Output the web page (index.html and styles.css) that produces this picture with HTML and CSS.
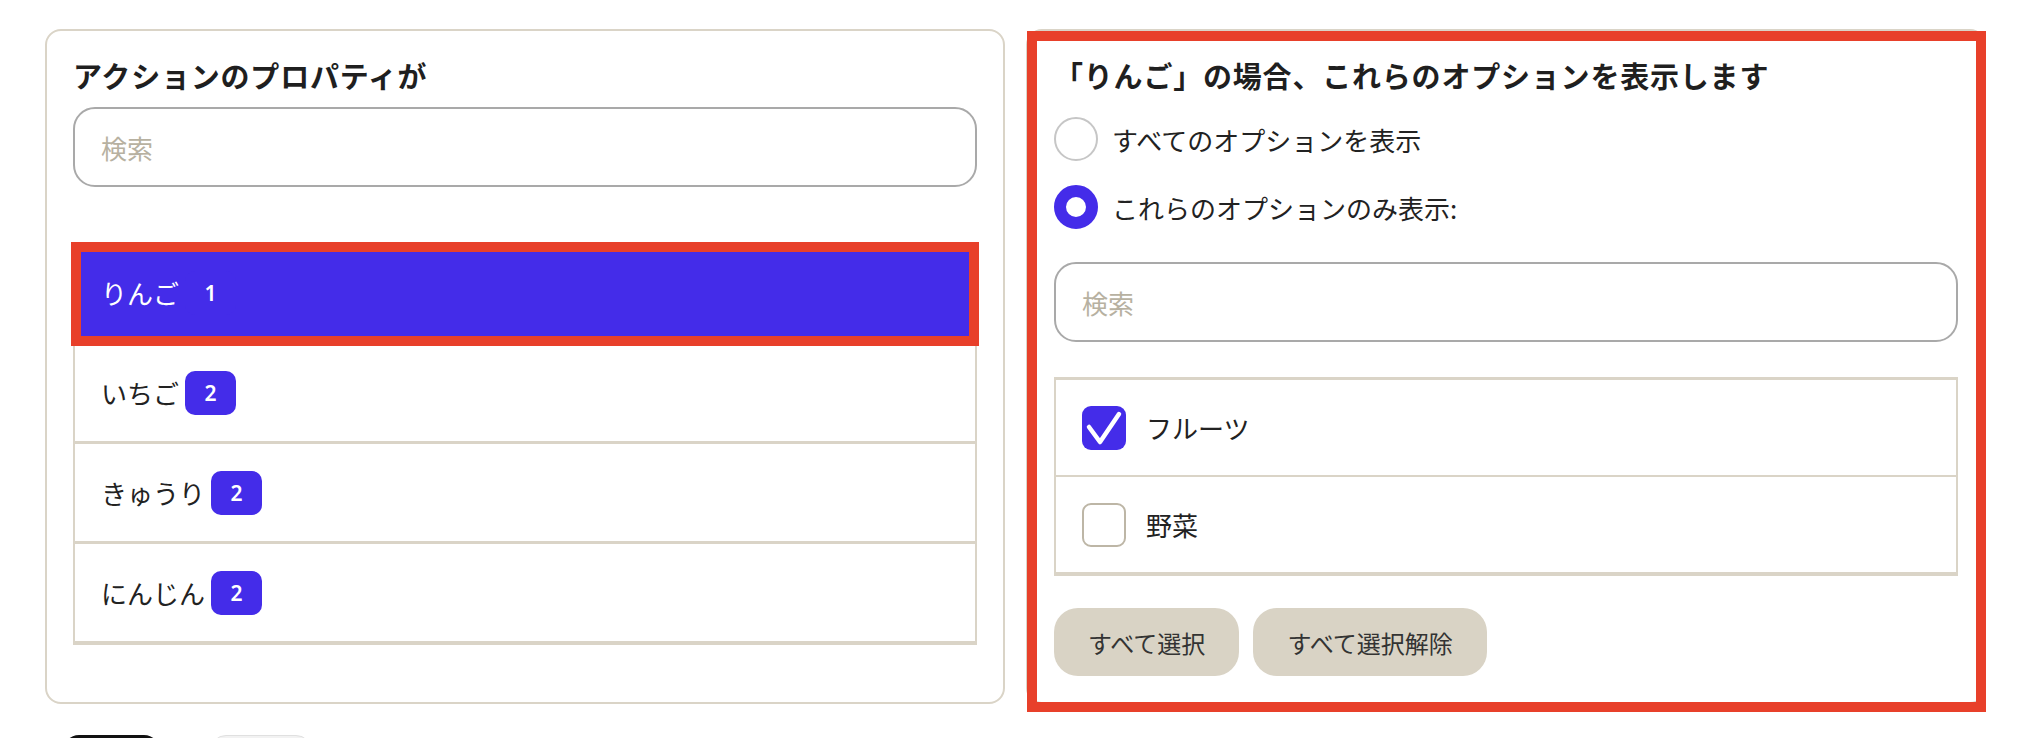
FILE: index.html
```html
<!DOCTYPE html>
<html lang="ja">
<head>
<meta charset="utf-8">
<title>オプション設定</title>
<link rel="stylesheet" href="styles.css">
</head>
<body>
<div class="page">
  <div class="panels">
    <section class="card">
      <h2 class="card-title">アクションのプロパティが</h2>
      <input class="search" type="text" placeholder="検索">
      <ul class="value-list">
        <li class="value-item is-selected"><span class="value-label">りんご</span><span class="badge">1</span></li>
        <li class="value-item"><span class="value-label">いちご</span><span class="badge">2</span></li>
        <li class="value-item"><span class="value-label">きゅうり</span><span class="badge">2</span></li>
        <li class="value-item"><span class="value-label">にんじん</span><span class="badge">2</span></li>
      </ul>
    </section>
    <section class="card card--annotated">
      <h2 class="card-title">「りんご」の場合、これらのオプションを表示します</h2>
      <div class="radio-group">
        <div class="radio-row"><span class="radio"></span><span>すべてのオプションを表示</span></div>
        <div class="radio-row"><span class="radio is-checked"></span><span>これらのオプションのみ表示:</span></div>
      </div>
      <input class="search search--options" type="text" placeholder="検索">
      <ul class="option-list">
        <li class="option-row">
          <span class="checkbox is-checked"><svg viewBox="0 0 44 44" width="44" height="44"><path d="M7 21 L18 36 L37 8" fill="none" stroke="#fff" stroke-width="4.5" stroke-linecap="round" stroke-linejoin="round"/></svg></span>
          <span>フルーツ</span>
        </li>
        <li class="option-row">
          <span class="checkbox"></span>
          <span>野菜</span>
        </li>
      </ul>
      <div class="actions">
        <button class="pill-btn" type="button">すべて選択</button>
        <button class="pill-btn" type="button">すべて選択解除</button>
      </div>
    </section>
  </div>
  <div class="footer-actions">
    <button class="btn btn--dark" type="button" aria-label="primary"></button>
    <button class="btn btn--light" type="button" aria-label="secondary"></button>
  </div>
</div>
</body>
</html>
```

FILE: styles.css
```css
body {
  margin: 0;
  background: #fff;
  color: #222;
  font-family: "Noto Sans CJK JP", "Noto Sans", sans-serif;
}

.page {
  padding: 29px 0 0 45px;
}

.panels {
  display: flex;
  gap: 21px;
  align-items: stretch;
}

.card {
  width: 960px;
  box-sizing: border-box;
  border: 2px solid #dad4c7;
  border-radius: 16px;
  padding: 26px;
  background: #fff;
}

.card--annotated {
  position: relative;
}

.card--annotated::after {
  content: "";
  position: absolute;
  top: 0;
  left: -1px;
  right: -2px;
  bottom: -10px;
  border: 10px solid #e8402a;
  pointer-events: none;
}

.card-title {
  margin: 0 0 14px;
  font-size: 29px;
  line-height: 36px;
  font-weight: 700;
  letter-spacing: 0.8px;
  color: #1f1f1f;
}

.search {
  display: block;
  width: 100%;
  height: 80px;
  box-sizing: border-box;
  border: 2px solid #a9a9a9;
  border-radius: 22px;
  padding: 0 26px;
  font-family: inherit;
  font-size: 26px;
  color: #222;
  background: #fff;
  outline: none;
}

.search::placeholder {
  color: #b7b1a1;
}

.value-list {
  list-style: none;
  margin: 56px 0 0;
  padding: 0;
  border-top: 1px solid #dad4c7;
  border-bottom: 1px solid #dad4c7;
}

.value-item {
  display: flex;
  align-items: center;
  gap: 6px;
  height: 100px;
  box-sizing: border-box;
  padding: 0 26px;
  border: 2px solid #dad4c7;
  border-top: 0;
  border-bottom-width: 3px;
  font-size: 26px;
}

.value-item.is-selected {
  background: #442ce9;
  color: #fff;
  outline: 10px solid #e8402a;
  outline-offset: -8px;
  position: relative;
}

.badge {
  display: inline-flex;
  align-items: center;
  justify-content: center;
  min-width: 51px;
  height: 44px;
  border-radius: 10px;
  background: #442ce9;
  color: #fff;
  font-family: "Noto Sans", sans-serif;
  font-weight: 600;
  font-size: 21px;
}

.radio-group {
  display: flex;
  flex-direction: column;
  gap: 22px;
  margin-top: 23px;
}

.radio-row {
  display: flex;
  align-items: center;
  gap: 14px;
  height: 46px;
  font-size: 26px;
}

.radio {
  width: 44px;
  height: 44px;
  box-sizing: border-box;
  border-radius: 50%;
  border: 2px solid #c6c6c6;
  background: #fff;
  flex: none;
}

.radio.is-checked {
  border: 12px solid #442ce9;
}

.search--options {
  margin-top: 32px;
}

.option-list {
  list-style: none;
  margin: 35px 0 0;
  padding: 0;
  border: 2px solid #dad4c7;
  border-top-width: 3px;
}

.option-row {
  display: flex;
  align-items: center;
  gap: 20px;
  height: 97px;
  box-sizing: border-box;
  padding: 0 26px;
  border-bottom: 2px solid #dad4c7;
  font-size: 26px;
}

.checkbox {
  width: 44px;
  height: 44px;
  box-sizing: border-box;
  border: 2px solid #bdb6a6;
  border-radius: 9px;
  background: #fff;
  flex: none;
  display: flex;
  align-items: center;
  justify-content: center;
}

.checkbox.is-checked {
  border: 0;
  background: #442ce9;
}

.checkbox svg {
  display: block;
}

.actions {
  display: flex;
  gap: 14px;
  margin-top: 32px;
}

.pill-btn {
  height: 68px;
  padding: 0 34px;
  border: 0;
  border-radius: 24px;
  background: #d9d3c5;
  color: #333;
  font-family: inherit;
  font-size: 24px;
}

.footer-actions {
  display: flex;
  gap: 50px;
  margin-top: 31px;
  padding-left: 18px;
}

.btn {
  height: 60px;
  border-radius: 16px;
}

.btn--dark {
  width: 97px;
  background: #111;
  border: 0;
}

.btn--light {
  width: 102px;
  background: #f2f2f2;
  border: 1px solid #e0e0e0;
}
```
